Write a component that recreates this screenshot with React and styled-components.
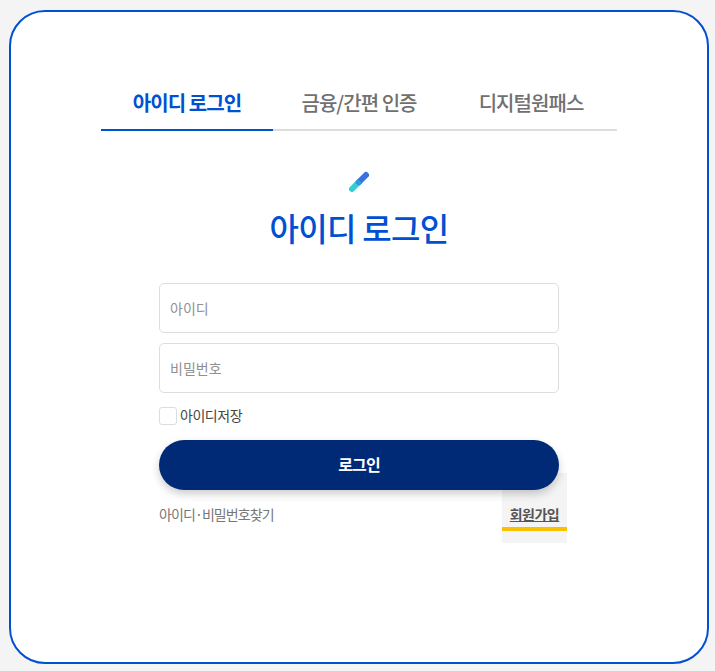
import React from "react";
import styled, { createGlobalStyle } from "styled-components";

const Global = createGlobalStyle`
  html, body { margin: 0; padding: 0; background: #f4f4f4; }
  body { font-family: "Noto Sans CJK KR", "Noto Sans", sans-serif; }
  * { box-sizing: border-box; }
`;
const Page = styled.div`
  width: 715px; height: 671px; padding: 10px 6px 7px 9px;
`;
const Card = styled.main`
  width: 700px; height: 654px; background: #fff;
  border: 2px solid #0050d2; border-radius: 36px;
  padding: 68px 90px 0;
  display: flex; flex-direction: column; align-items: center;
`;
const Tabs = styled.nav`
  width: 516px; display: flex;
`;
const Tab = styled.a`
  flex: 1; height: 51px; display: flex; align-items: center; justify-content: center;
  padding-bottom: 3px;
  font-size: 20px; letter-spacing: -0.95px; line-height: 1;
  font-weight: ${p => (p.$active ? 700 : 500)};
  color: ${p => (p.$active ? "#0050d2" : "#707070")};
  border-bottom: 2px solid ${p => (p.$active ? "#0050d2" : "#ddd")};
`;
const Mark = styled.svg`
  display: block; margin-top: 39px;
`;
const Title = styled.h1`
  margin: 11px 0 0; font-size: 32px; line-height: 44px; font-weight: 500;
  letter-spacing: -0.7px; color: #0050d2;
`;
const Form = styled.form`
  width: 400px; margin-top: 34px; display: flex; flex-direction: column;
`;
const Input = styled.input`
  width: 100%; height: 50px; padding: 0 10px; margin-bottom: 10px;
  border: 1px solid #ddd; border-radius: 5px; background: #fff;
  font: 400 14px "Noto Sans CJK KR", sans-serif; color: #333;
  &::placeholder { color: #909090; opacity: 1; }
`;
const SaveRow = styled.label`
  display: flex; align-items: center; gap: 3px; height: 18px; margin: 4px 0 15px;
  font-size: 14px; letter-spacing: -0.45px; font-weight: 400; color: #444;
`;
const SaveText = styled.span`
  margin-top: -2px;
`;
const Check = styled.span`
  width: 18px; height: 18px; border: 1px solid #ddd; border-radius: 3px; background: #fff;
`;
const Submit = styled.button`
  position: relative; z-index: 1;
  width: 100%; height: 50px; padding: 0 0 2px; border: 0; border-radius: 25px;
  background: #002a76; color: #fff;
  font: 700 16px "Noto Sans CJK KR", sans-serif; letter-spacing: -0.9px;
  box-shadow: 0 4px 8px rgba(0, 0, 0, 0.2);
`;
const Links = styled.div`
  width: 400px; margin-top: -17px; display: flex; justify-content: space-between; align-items: flex-start;
`;
const FindLink = styled.a`
  margin-top: 30px; font-size: 14px; line-height: 22px; letter-spacing: -0.9px; color: #777;
`;
const JoinLink = styled.a`
  width: 65px; height: 70px; margin-right: -8px; background: #f4f4f4;
  display: flex; flex-direction: column; align-items: center; padding-top: 30px;
  position: relative;
  font-size: 14px; line-height: 22px; letter-spacing: -0.5px; font-weight: 700; color: #555;
  text-decoration: underline;
  &::after {
    content: ""; position: absolute; left: 0; right: 0; top: 54px; height: 4px; background: #f7c100;
  }
`;

export default function App() {
  return (
    <>
      <Global />
      <Page>
        <Card>
          <Tabs>
            <Tab $active>아이디 로그인</Tab>
            <Tab>금융/간편 인증</Tab>
            <Tab>디지털원패스</Tab>
          </Tabs>
          <Mark width="24" height="24" viewBox="0 0 24 24" aria-hidden="true">
            <line x1="5" y1="19" x2="12" y2="12" stroke="#34cdd6" strokeWidth="6" strokeLinecap="round" />
            <line x1="12" y1="12" x2="19" y2="5" stroke="#3a70e0" strokeWidth="6" strokeLinecap="round" />
            <line x1="10.5" y1="13.5" x2="13" y2="11" stroke="#2a9fd8" strokeWidth="6" />
          </Mark>
          <Title>아이디 로그인</Title>
          <Form>
            <Input placeholder="아이디" />
            <Input placeholder="비밀번호" type="password" />
            <SaveRow><Check /><SaveText>아이디저장</SaveText></SaveRow>
            <Submit type="button">로그인</Submit>
          </Form>
          <Links>
            <FindLink>아이디·비밀번호찾기</FindLink>
            <JoinLink>회원가입</JoinLink>
          </Links>
        </Card>
      </Page>
    </>
  );
}
